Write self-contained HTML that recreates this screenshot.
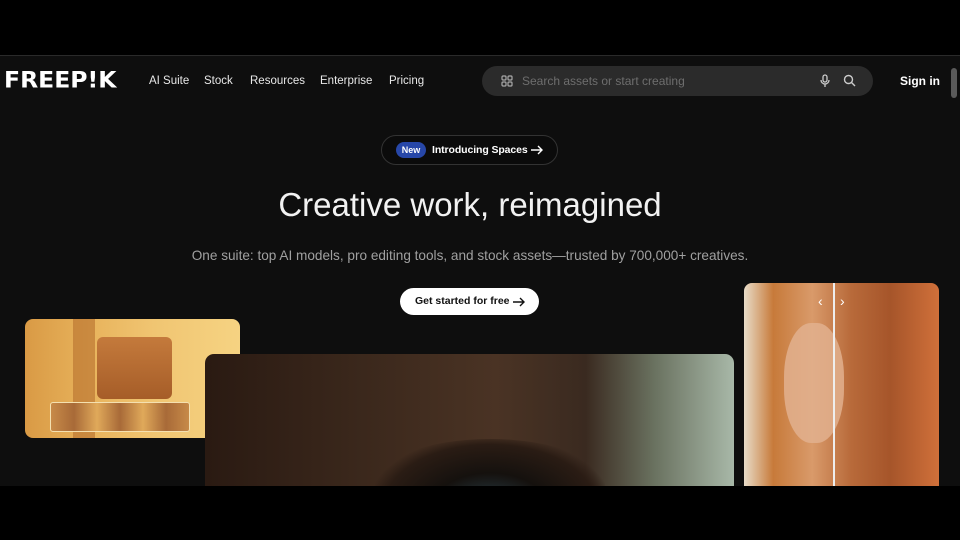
<!DOCTYPE html>
<html><head><meta charset="utf-8"><style>
*{margin:0;padding:0;box-sizing:border-box}
body{width:960px;height:540px;background:#000;overflow:hidden;font-family:"Liberation Sans",sans-serif;position:relative}
#page{position:absolute;left:0;top:55px;width:960px;height:431px;background:#0e0e0e;border-top:1px solid #2a2a2a;overflow:hidden}
.abs{position:absolute}
.nav{color:#e8e8e8;font-size:11.5px;top:19px}
.logo{left:4px;top:12px;color:#fff;font-weight:900;font-size:21px;font-family:"DejaVu Sans","Liberation Sans",sans-serif;transform:scale(1.12,1.05);transform-origin:left}
.search{left:482px;top:10px;width:391px;height:30px;border-radius:15px;background:#2b2b2b}
.pill{left:381px;top:79px;width:177px;height:30px;border:1px solid #333;border-radius:15px;background:#0b0b0b}
</style></head><body>
<div id="page">
<div class="abs logo">FREEP!K</div>
<div class="abs nav" style="left:149px">AI Suite</div>
<div class="abs nav" style="left:204px">Stock</div>
<div class="abs nav" style="left:250px">Resources</div>
<div class="abs nav" style="left:320px">Enterprise</div>
<div class="abs nav" style="left:389px">Pricing</div>
<div class="abs search">
 <svg class="abs" style="left:19px;top:9px" width="12" height="12" viewBox="0 0 12 12" fill="none" stroke="#aaa" stroke-width="1.2"><rect x="1" y="1" width="4" height="4" rx="1"/><rect x="7" y="1" width="4" height="4" rx="1"/><rect x="1" y="7" width="4" height="4" rx="1"/><rect x="7" y="7" width="4" height="4" rx="1"/></svg>
 <div class="abs" style="left:40px;top:8px;font-size:12px;color:#6e6e6e">Search assets or start creating</div>
 <svg class="abs" style="left:337px;top:8px" width="12" height="14" viewBox="0 0 12 14" fill="none" stroke="#ccc" stroke-width="1.3"><rect x="4" y="1" width="4" height="7" rx="2"/><path d="M2 6a4 4 0 0 0 8 0M6 10v3"/></svg>
 <svg class="abs" style="left:361px;top:8px" width="13" height="13" viewBox="0 0 13 13" fill="none" stroke="#ccc" stroke-width="1.4"><circle cx="5.5" cy="5.5" r="4"/><path d="M8.5 8.5l3.5 3.5"/></svg>
</div>
<div class="abs" style="left:900px;top:18px;color:#fff;font-size:12px;font-weight:bold">Sign in</div>
<div class="abs" style="left:951px;top:12px;width:6px;height:30px;border-radius:3px;background:#5a5a5a"></div>
<div class="abs pill">
 <div class="abs" style="left:14px;top:6px;width:30px;height:16px;border-radius:8px;background:#2747a8;color:#fff;font-size:9px;font-weight:bold;text-align:center;line-height:16px">New</div>
 <div class="abs" style="left:50px;top:8px;color:#fff;font-size:10.5px;font-weight:bold;letter-spacing:-0.1px">Introducing Spaces</div>
 <svg class="abs" style="left:148px;top:9px" width="14" height="10" viewBox="0 0 14 10" fill="none" stroke="#fff" stroke-width="1.4"><path d="M1 5h11M8 1l4 4-4 4"/></svg>
</div>
<div class="abs" style="left:0;width:940px;top:130px;text-align:center;color:#f2f2f2;font-size:33px">Creative work, reimagined</div>
<div class="abs" style="left:0;width:940px;top:192px;text-align:center;color:#a0a0a0;font-size:13.6px">One suite: top AI models, pro editing tools, and stock assets—trusted by 700,000+ creatives.</div>
<div class="abs" style="left:400px;top:232px;width:139px;height:27px;border-radius:14px;background:#fff;color:#111;font-size:10.5px;font-weight:bold;line-height:27px;padding-left:15px">Get started for free</div>
<svg class="abs" style="left:512px;top:241px" width="14" height="10" viewBox="0 0 14 10" fill="none" stroke="#111" stroke-width="1.4"><path d="M1 5h11M8 1l4 4-4 4"/></svg>
<div class="abs" style="left:25px;top:263px;width:215px;height:119px;border-radius:8px;background:linear-gradient(90deg,#d99a45 0%,#e8b35c 30%,#f0c572 60%,#f6d382 100%);overflow:hidden">
 <div class="abs" style="left:48px;top:0;width:22px;height:119px;background:#b56e2d;opacity:.6"></div>
 <div class="abs" style="left:72px;top:18px;width:75px;height:62px;border-radius:6px;background:linear-gradient(#c47a3c,#a65d28)"></div>
 <div class="abs" style="left:25px;top:83px;width:140px;height:30px;border:1px solid #f4e0b0;border-radius:3px;background:linear-gradient(90deg,#c78a48,#a86a38,#e0a95a,#a86a38,#e0a95a,#a86a38,#c78a48)"></div>
</div>
<div class="abs" style="left:205px;top:298px;width:529px;height:140px;border-radius:9px;overflow:hidden;background:linear-gradient(90deg,#2a1a12 0%,#3b281c 30%,#4a3324 55%,#3a2a20 72%,#6a7260 85%,#a8b8a8 100%)">
 <div class="abs" style="left:170px;top:85px;width:230px;height:90px;border-radius:50%;background:radial-gradient(ellipse at 50% 75%,#2a3f48 0%,#15110e 35%,#2a1c14 65%,transparent 75%)"></div>
</div>
<div class="abs" style="left:744px;top:227px;width:195px;height:210px;border-radius:8px;overflow:hidden;background:linear-gradient(90deg,#e8dcc8 0%,#c77a3a 15%,#d99a6a 35%,#b86a3a 55%,#a6552a 75%,#d0703a 100%)">
 <div class="abs" style="left:40px;top:40px;width:60px;height:120px;border-radius:45%;background:#e2b08e;opacity:.85"></div>
 <div class="abs" style="left:89px;top:0;width:2px;height:210px;background:#eee"></div>
 <div class="abs" style="left:74px;top:10px;color:#fff;font-size:14px">‹</div>
 <div class="abs" style="left:96px;top:10px;color:#fff;font-size:14px">›</div>
</div>
</div>
</body></html>
